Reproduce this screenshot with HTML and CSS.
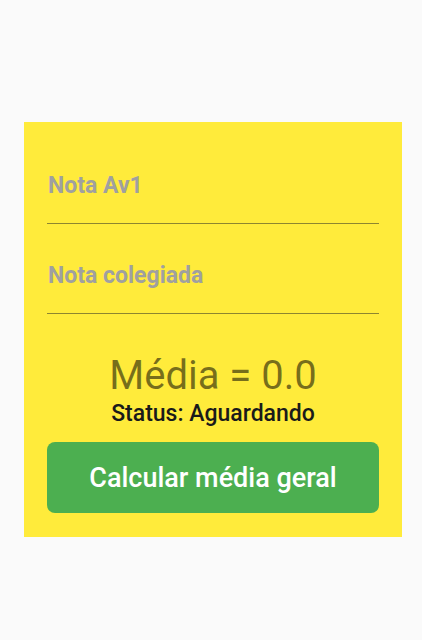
FILE: index.html
```html
<!DOCTYPE html>
<html lang="pt">
<head>
<meta charset="utf-8">
<link rel="stylesheet" href="styles.css">
</head>
<body>
<main class="screen">
  <section class="card">
    <label class="field">
      <input class="field-input" type="text" placeholder="Nota Av1">
    </label>
    <label class="field">
      <input class="field-input" type="text" placeholder="Nota colegiada">
    </label>
    <div class="result">
      <div class="media">Média = 0.0</div>
      <div class="status">Status: Aguardando</div>
    </div>
    <button class="btn" type="button">Calcular média geral</button>
  </section>
</main>
</body>
</html>
```
FILE: styles.css
```css
* { box-sizing: border-box; }
html, body {
  margin: 0;
  height: 100%;
  background: #fafafa;
  font-family: Roboto, "Noto Sans", sans-serif;
}
.screen {
  height: 640px;
  padding: 122px 20px 0 24px;
}
.card {
  width: 378px;
  height: 415px;
  background: #ffeb3b;
  padding: 30px 23px 0 23px;
  display: flex;
  flex-direction: column;
}
.field {
  display: block;
  border-bottom: 1px solid #8d8530;
  height: 72px;
  flex: none;
}
.field + .field {
  margin-top: 18px;
}
.field-input {
  width: 100%;
  border: none;
  background: transparent;
  outline: none;
  padding: 20px 1px 0;
  font-family: Roboto, sans-serif;
  font-size: 23px;
  font-weight: 700;
  color: #333;
  line-height: 27px;
}
.field-input::placeholder {
  color: #a0a0a0;
  opacity: 1;
}
.result {
  text-align: center;
  margin-top: 38px;
}
.media {
  font-size: 40px;
  line-height: 48px;
  color: rgba(0, 0, 0, 0.54);
}
.status {
  font-size: 23px;
  font-weight: 500;
  line-height: 27px;
  color: #1a1a1a;
}
.btn {
  margin-top: 15px;
  height: 71px;
  width: 100%;
  flex: none;
  border: none;
  border-radius: 8px;
  background: #4caf50;
  color: #fff;
  font-family: Roboto, sans-serif;
  font-size: 27px;
  font-weight: 500;
}
```
